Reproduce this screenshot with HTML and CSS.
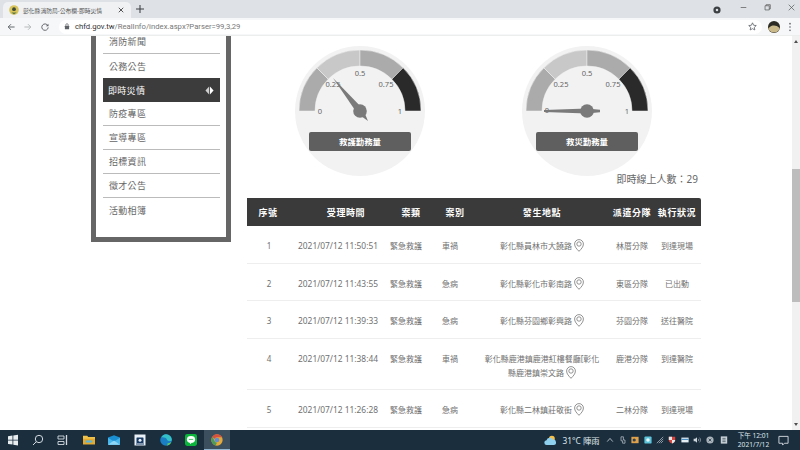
FILE: index.html
```html
<!DOCTYPE html>
<html lang="zh-Hant">
    <head>
        <meta charset="UTF-8">
        <title>彰化縣消防局-公布欄-即時災情</title>
        <link rel="stylesheet" href="styles.css">
    </head>
    <body>
        <!-- browser chrome -->
        <div class="tab-strip">
            <div class="tab">
                <svg class="favicon" viewBox="0 0 10 10"><circle cx="5" cy="5" r="4.8" fill="#d8c45a"/><circle cx="5" cy="4.2" r="1.9" fill="#3d4a3a"/><path d="M2.4 7.6h5.2L5 9.6z" fill="#5a7a45"/></svg>
                <span class="tab-title">彰化縣消防局-公布欄-即時災情</span>
                <svg class="tab-close" viewBox="0 0 8 8"><path d="M1 1l6 6M7 1L1 7" stroke="#444" stroke-width="1.2"/></svg>
            </div>
            <svg class="tab-new" viewBox="0 0 10 10"><path d="M5 0v10M0 5h10" stroke="#3c4043" stroke-width="1.3"/></svg>
            <svg class="record" viewBox="0 0 10 10"><circle cx="5" cy="5" r="4.5" fill="#3c4043"/><circle cx="5" cy="5" r="1.6" fill="#dee1e6"/></svg>
            <svg class="win-btn" viewBox="0 0 10 10"><path d="M1 5h8" stroke="#555" stroke-width="1"/></svg>
            <svg class="win-btn" viewBox="0 0 10 10"><path d="M1.5 2.5h6v6h-6zM3 2.5V1h6v6H7.5" fill="none" stroke="#555" stroke-width="1"/></svg>
            <svg class="win-btn" viewBox="0 0 10 10"><path d="M1 1l8 8M9 1l-8 8" stroke="#555" stroke-width="1"/></svg>
        </div>
        <div class="toolbar">
            <svg class="nav-icon" viewBox="0 0 10 10"><path d="M9.5 5H1.5M5 1.5L1.5 5 5 8.5" fill="none" stroke="#5f6368" stroke-width="1.2"/></svg>
            <svg class="nav-icon" viewBox="0 0 10 10"><path d="M.5 5h8M5 1.5L8.5 5 5 8.5" fill="none" stroke="#b4b7ba" stroke-width="1.2"/></svg>
            <svg class="nav-icon" viewBox="0 0 10 10"><path d="M8.5 3.2A4 4 0 1 0 9 5.5" fill="none" stroke="#5f6368" stroke-width="1.2"/><path d="M9.3.8v3.3H6z" fill="#5f6368"/></svg>
            <div class="omnibox">
                <svg class="lock" viewBox="0 0 8 10"><rect x="1" y="4" width="6" height="5" rx=".6" fill="#5f6368"/><path d="M2.3 4V2.7a1.7 1.7 0 0 1 3.4 0V4" fill="none" stroke="#5f6368"/></svg>
                <span class="url"><b>chfd.gov.tw</b>/RealInfo/index.aspx?Parser=99,3,29</span>
                <svg class="star" viewBox="0 0 10 10"><path d="M5 .9l1.25 2.7 2.95.35-2.2 2 .6 2.9L5 7.4 2.4 8.85l.6-2.9-2.2-2 2.95-.35z" fill="none" stroke="#5f6368" stroke-width=".9"/></svg>
            </div>
            <svg class="avatar" viewBox="0 0 12 12"><circle cx="6" cy="6" r="6" fill="#2b2a24"/><path d="M.3 7.5c2-2.5 4-3 5.7-3s4 .6 5.700 2.800A6 6 0 0 1 .3 7.5z" fill="#c9b98b"/></svg>
            <svg class="menu-dots" viewBox="0 0 4 12"><circle cx="2" cy="2" r="1" fill="#5f6368"/><circle cx="2" cy="6" r="1" fill="#5f6368"/><circle cx="2" cy="10" r="1" fill="#5f6368"/></svg>
        </div>

        <div class="viewport">
            <main class="page">
                <nav class="sidebar">
                    <ul>
                        <li>消防新聞</li>
                        <li>公務公告</li>
                        <li class="active">即時災情
                            <svg class="diamond" viewBox="0 0 10 10"><path d="M4.6.5L.5 5l4.100 4.500z" fill="#cfcfcf"/><path d="M5.500 .5L9.500 5l-4 4.500z" fill="#fff"/></svg>
                        </li>
                        <li>防疫專區</li>
                        <li>宣導專區</li>
                        <li>招標資訊</li>
                        <li>徵才公告</li>
                        <li>活動相簿</li>
                    </ul>
                </nav>

                <section class="content">
                    <div class="gauges">
                        <svg class="gauge" viewBox="-65 -65 130 130">
                            <circle r="65" fill="#f2f2f2"/>
                            <path class="seg-mid" d="M-61 0A61 61 0 0 1-43.13-43.13L-31.82-31.82A45 45 0 0 0-45 0Z"/>
                            <path class="seg-light" d="M-43.13-43.13A61 61 0 0 1 0-61L0-45A45 45 0 0 0-31.82-31.82Z"/>
                            <path class="seg-mid" d="M0-61A61 61 0 0 1 43.13-43.13L31.82-31.82A45 45 0 0 0 0-45Z"/>
                            <path class="seg-dark" d="M43.13-43.13A61 61 0 0 1 61 0L45 0A45 45 0 0 0 31.82-31.82Z"/>
                            <text class="tick" x="-40" y="3">0</text>
                            <text class="tick" x="-27" y="-24">0.25</text>
                            <text class="tick" x="0" y="-35">0.5</text>
                            <text class="tick" x="26" y="-24">0.75</text>
                            <text class="tick" x="40" y="3">1</text>
                            <polygon class="needle" points="-27,-33 2.8,-2.3 8,10 -2.8,2.3"/>
                            <circle class="needle" r="6.8"/>
                            <rect class="gauge-btn" x="-51" y="21" width="102" height="19" rx="2"/>
                            <text class="gauge-label" x="0" y="33.5">救護勤務量</text>
                        </svg>
                        <svg class="gauge" viewBox="-65 -65 130 130">
                            <circle r="65" fill="#f2f2f2"/>
                            <path class="seg-mid" d="M-61 0A61 61 0 0 1-43.13-43.13L-31.82-31.82A45 45 0 0 0-45 0Z"/>
                            <path class="seg-light" d="M-43.13-43.13A61 61 0 0 1 0-61L0-45A45 45 0 0 0-31.82-31.82Z"/>
                            <path class="seg-mid" d="M0-61A61 61 0 0 1 43.13-43.13L31.82-31.82A45 45 0 0 0 0-45Z"/>
                            <path class="seg-dark" d="M43.13-43.13A61 61 0 0 1 61 0L45 0A45 45 0 0 0 31.82-31.82Z"/>
                            <text class="tick" x="-40" y="2">0</text>
                            <text class="tick" x="-26" y="-24">0.25</text>
                            <text class="tick" x="0" y="-35">0.5</text>
                            <text class="tick" x="26" y="-24">0.75</text>
                            <text class="tick" x="40" y="3">1</text>
                            <polygon class="needle" points="-43,-1 0,-2.5 13,-1.3 13,1.3 0,2.5 -43,1"/>
                            <circle class="needle" r="6.8"/>
                            <rect class="gauge-btn" x="-51" y="21" width="102" height="19" rx="2"/>
                            <text class="gauge-label" x="0" y="33.5">救災勤務量</text>
                        </svg>
                    </div>
                    <div class="online">即時線上人數：29</div>

                    <table class="cases">
                        <colgroup>
                            <col class="c-no"><col class="c-time"><col class="c-kind"><col class="c-type"><col class="c-addr"><col class="c-unit"><col class="c-state">
                        </colgroup>
                        <thead>
                            <tr>
                                <th>序號</th>
                                <th class="shift-8">受理時間</th>
                                <th class="shift-5">案類</th>
                                <th class="shift-5">案別</th>
                                <th>發生地點</th>
                                <th>派遣分隊</th>
                                <th>執行狀況</th>
                            </tr>
                        </thead>
                        <tbody>
                            <tr>
                                <td>1</td>
                                <td class="time">2021/07/12 11:50:51</td>
                                <td>緊急救護</td>
                                <td>車禍</td>
                                <td>彰化縣員林市大饒路 <svg class="pin" viewBox="0 0 10 13"><path d="M5 12.3C2.8 10 .6 7.9 .6 5a4.4 4.4 0 0 1 8.8 0c0 2.900-2.200 5-4.400 7.300z" fill="none" stroke="#777" stroke-width=".8"/><circle cx="5" cy="5" r="2.2" fill="none" stroke="#777" stroke-width=".8"/></svg></td>
                                <td>林厝分隊</td>
                                <td>到達現場</td>
                            </tr>
                            <tr>
                                <td>2</td>
                                <td class="time">2021/07/12 11:43:55</td>
                                <td>緊急救護</td>
                                <td>急病</td>
                                <td>彰化縣彰化市彰南路 <svg class="pin" viewBox="0 0 10 13"><path d="M5 12.3C2.8 10 .6 7.9 .6 5a4.4 4.4 0 0 1 8.8 0c0 2.900-2.200 5-4.400 7.300z" fill="none" stroke="#777" stroke-width=".8"/><circle cx="5" cy="5" r="2.2" fill="none" stroke="#777" stroke-width=".8"/></svg></td>
                                <td>東區分隊</td>
                                <td>已出動</td>
                            </tr>
                            <tr>
                                <td>3</td>
                                <td class="time">2021/07/12 11:39:33</td>
                                <td>緊急救護</td>
                                <td>急病</td>
                                <td>彰化縣芬園鄉彰興路 <svg class="pin" viewBox="0 0 10 13"><path d="M5 12.3C2.8 10 .6 7.9 .6 5a4.4 4.4 0 0 1 8.8 0c0 2.900-2.200 5-4.400 7.300z" fill="none" stroke="#777" stroke-width=".8"/><circle cx="5" cy="5" r="2.2" fill="none" stroke="#777" stroke-width=".8"/></svg></td>
                                <td>芬園分隊</td>
                                <td>送往醫院</td>
                            </tr>
                            <tr>
                                <td>4</td>
                                <td class="time">2021/07/12 11:38:44</td>
                                <td>緊急救護</td>
                                <td>車禍</td>
                                <td>彰化縣鹿港鎮鹿港紅樓餐廳[彰化縣鹿港鎮崇文路 <svg class="pin" viewBox="0 0 10 13"><path d="M5 12.3C2.8 10 .6 7.9 .6 5a4.4 4.4 0 0 1 8.8 0c0 2.900-2.200 5-4.400 7.300z" fill="none" stroke="#777" stroke-width=".8"/><circle cx="5" cy="5" r="2.2" fill="none" stroke="#777" stroke-width=".8"/></svg></td>
                                <td>鹿港分隊</td>
                                <td>到達醫院</td>
                            </tr>
                            <tr>
                                <td>5</td>
                                <td class="time">2021/07/12 11:26:28</td>
                                <td>緊急救護</td>
                                <td>急病</td>
                                <td>彰化縣二林鎮莊敬街 <svg class="pin" viewBox="0 0 10 13"><path d="M5 12.3C2.8 10 .6 7.9 .6 5a4.4 4.4 0 0 1 8.8 0c0 2.900-2.200 5-4.400 7.300z" fill="none" stroke="#777" stroke-width=".8"/><circle cx="5" cy="5" r="2.2" fill="none" stroke="#777" stroke-width=".8"/></svg></td>
                                <td>二林分隊</td>
                                <td>到達現場</td>
                            </tr>
                        </tbody>
                    </table>
                </section>
            </main>
            <div class="scrollbar">
                <span class="arrow-up"></span>
                <div class="thumb"></div>
                <span class="arrow-down"></span>
            </div>
        </div>

        <!-- windows taskbar -->
        <footer class="taskbar">
            <div class="task-slot"><svg class="task-icon" viewBox="0 0 12 12"><path d="M1 2.2l4.500-.7v4.200H1zM6.300 1.400L11 .7v5H6.300zM1 6.400h4.500v4.200L1 9.900zM6.300 6.400H11v5l-4.700-.7z" fill="#e8edf0"/></svg></div>
            <div class="task-slot"><svg class="task-icon" viewBox="0 0 12 12"><circle cx="7" cy="5" r="3.7" fill="none" stroke="#d5dbe0"/><path d="M4.300 7.700L1 11" stroke="#d5dbe0"/></svg></div>
            <div class="task-slot"><svg class="task-icon" viewBox="0 0 12 12"><path d="M1 2h6v3H1zM1 7.500h6v3H1z" fill="none" stroke="#d5dbe0" stroke-width=".9"/><path d="M9.500 1v10" stroke="#d5dbe0" stroke-width="1.3"/></svg></div>
            <div class="apps">
                <div class="app-slot"><svg class="task-icon" viewBox="0 0 14 12"><path d="M0 1h5l1 1.500h8V11H0z" fill="#f0c24a"/><path d="M0 4.500h14V11H0z" fill="#e6a92c"/><path d="M3 6.500h8V9H3z" fill="#5db4d6"/></svg></div>
                <div class="app-slot"><svg class="task-icon" viewBox="0 0 14 12"><path d="M0 3l7-2.500L14 3v8.500H0z" fill="#1a8fd1"/><path d="M0 3.500L7 7.800l7-4.300v8H0z" fill="#47b4ea"/><path d="M0 11.500L7 6.500l7 5z" fill="#8fd5f5"/></svg></div>
                <div class="app-slot"><svg class="task-icon" viewBox="0 0 12 12"><rect x=".5" y=".5" width="11" height="11" fill="#e9f0f6"/><rect x="2.5" y="3.5" width="7" height="5.5" rx=".6" fill="#173a64"/><circle cx="6" cy="6.2" r="1.5" fill="#e9f0f6"/><path d="M2 10h8" stroke="#173a64"/></svg></div>
                <div class="app-slot"><svg class="task-icon" viewBox="0 0 14 14"><circle cx="7" cy="7" r="6.8" fill="#1a7fc4"/><path d="M7 .2a6.800 6.800 0 0 1 6.800 7.300c-1.500 1-5 1-5.600-.9C7.500 4.500 4 3.500 1.500 4 2.500 1.800 4.500.2 7 .2z" fill="#35c1c8"/><path d="M13.600 8.500c-1 3-3.300 5-6.300 5.200 1.500-.7 2-2 1.500-3.200 1.600 .6 3.600 .1 4.800-2z" fill="#66cf5c"/></svg></div>
                <div class="app-slot"><svg class="task-icon" viewBox="0 0 14 14"><rect width="14" height="14" rx="2.5" fill="#0bb53c"/><ellipse cx="7" cy="6.3" rx="4.8" ry="3.9" fill="#fff"/><path d="M5.500 9.500L6 12l2.500-2.500z" fill="#fff"/><path d="M4.500 6.300h5" stroke="#0bb53c" stroke-width=".9"/></svg></div>
                <div class="app-slot app-on"><svg class="task-icon" viewBox="0 0 14 14"><circle cx="7" cy="7" r="6.6" fill="#e5a93a"/><path d="M7 .4A6.600 6.600 0 0 1 12.800 3.800H7A3.200 3.200 0 0 0 4 5.800L1.600 3.200A6.600 6.600 0 0 1 7 .4z" fill="#d9503f"/><path d="M1.600 3.200L4.700 9A3.200 3.200 0 0 0 7 10.300l-1.700 3.100A6.600 6.600 0 0 1 1.600 3.200z" fill="#4c9b58"/><circle cx="7" cy="7" r="2.7" fill="#5c8fd8"/></svg></div>
            </div>
            <div class="tray">
                <svg class="weather" viewBox="0 0 14 12"><circle cx="8.5" cy="4" r="3.2" fill="#f2c14b"/><path d="M3 11a2.600 2.600 0 0 1-.3-5.200A3.600 3.600 0 0 1 9.500 5a3 3 0 0 1 1 6z" fill="#8fd0ee"/></svg>
                <span class="temp">31°C 陣雨</span>
                <svg class="tray-icon" viewBox="0 0 10 10"><path d="M1.500 7L5 3l3.500 4" fill="none" stroke="#cfd6db"/></svg>
                <svg class="tray-icon" viewBox="0 0 10 10"><path d="M2.500 1h3v4h2v4h-3V6h-2z" fill="none" stroke="#cfd6db" stroke-width=".8"/></svg>
                <svg class="tray-icon" viewBox="0 0 10 10"><rect x=".5" y="1" width="9" height="8" fill="#dfa24a"/><circle cx="4" cy="5" r="2" fill="#33424f"/></svg>
                <svg class="tray-icon" viewBox="0 0 10 10"><rect x=".5" y=".5" width="9" height="9" rx="1.5" fill="#5cc3d8"/><circle cx="5" cy="5" r="2.2" fill="#eaf6f9"/></svg>
                <svg class="tray-icon" viewBox="0 0 10 10"><path d="M1 9L9 1M3.500 9L9 3.500M6 9l3-3" stroke="#b9c2c8" stroke-width=".9"/></svg>
                <svg class="tray-icon" viewBox="0 0 10 10"><path d="M1 1h8v4c0 2.500-2 3.800-4 4.500C3 8.800 1 7.500 1 5z" fill="#d8453f"/><path d="M1 1h4v4H1zM5 5h4c0 2-2 3.800-4 4.500z" fill="#e8e8e8"/></svg>
                <svg class="tray-icon" viewBox="0 0 10 10"><rect x=".5" y="2" width="9" height="6" fill="#e5eef3"/><rect x=".5" y="3.5" width="9" height="1.5" fill="#4d8fc0"/></svg>
                <svg class="tray-icon" viewBox="0 0 10 10"><path d="M.8 3.500h2L5 1.500v7L2.800 6.500h-2z" fill="#cfd6db"/><path d="M6.500 3.500a2 2 0 0 1 0 3M8 2a4 4 0 0 1 0 6" fill="none" stroke="#cfd6db" stroke-width=".7"/></svg>
                <svg class="tray-icon" viewBox="0 0 10 10"><circle cx="5" cy="5" r="4.5" fill="#aab4ba"/><path d="M3.300 3.300l3.400 3.400M6.700 3.300L3.300 6.700" stroke="#22384a"/></svg>
                <svg class="tray-icon ime" viewBox="0 0 10 10"><rect x="1" y=".5" width="8" height="9" fill="#c8d0d6"/><path d="M3 3h4M3 5h4M3 7h4" stroke="#4a5a66"/></svg>
                <div class="clock"><span>下午 12:01</span><span>2021/7/12</span></div>
                <svg class="notify" viewBox="0 0 12 12"><path d="M1 1.500h10v7.500H7L5 11V9H1z" fill="none" stroke="#d5dbe0"/></svg>
            </div>
        </footer>
    </body>
</html>
```

FILE: styles.css
```css
html, body {
    width: 800px;
    height: 450px;
    overflow: hidden;
}

body {
    margin: 0;
    display: flex;
    flex-direction: column;
    background: #fff;
    color: #666;
    font-family: "Noto Sans", "Noto Sans CJK TC", sans-serif;
}

/* browser chrome */
.tab-strip {
    height: 18px;
    flex: none;
    display: flex;
    align-items: center;
    background: #dee1e6;
}

.tab {
    width: 128px;
    height: 16px;
    margin: 2px 0 0 3px;
    display: flex;
    align-items: center;
    background: #eff1f3;
    border-radius: 5px 5px 0 0;
}

.favicon {
    width: 10px;
    height: 10px;
    margin-left: 6px;
}

.tab-title {
    margin-left: 4px;
    width: 93px;
    font-size: 5.8px;
    color: #555;
    white-space: nowrap;
}

.tab-close {
    width: 6px;
    height: 6px;
    margin-left: 2px;
}

.tab-new {
    width: 8px;
    height: 8px;
    margin-left: 5px;
}

.record {
    width: 8px;
    height: 8px;
    margin-left: 569px;
    margin-top: 1px;
}

.win-btn {
    width: 7px;
    height: 7px;
    margin-left: 17px;
    margin-top: -4px;
}

.win-btn:nth-of-type(3) {
    margin-left: 19px;
}

.toolbar {
    height: 18px;
    flex: none;
    display: flex;
    align-items: center;
    background: #f6f7f8;
    border-bottom: 1px solid #eceded;
    box-sizing: border-box;
    padding-left: 7px;
}

.nav-icon {
    width: 8px;
    height: 8px;
    margin-right: 9px;
}

.omnibox {
    width: 703px;
    height: 14px;
    margin-left: 1px;
    display: flex;
    align-items: center;
    background: #fff;
    border-radius: 7px;
}

.lock {
    width: 6px;
    height: 7px;
    margin-left: 5px;
}

.url {
    margin-left: 5px;
    font-family: Roboto, sans-serif;
    font-size: 7.7px;
    color: #777;
}

.url b {
    font-weight: 400;
    color: #333;
}

.star {
    width: 9px;
    height: 9px;
    margin-left: auto;
    margin-right: 5px;
}

.avatar {
    width: 12px;
    height: 12px;
    margin-left: 6px;
}

.menu-dots {
    width: 4px;
    height: 10px;
    margin-left: 8px;
}

/* scrolled page */
.viewport {
    flex: 1;
    min-height: 0;
    display: flex;
    overflow: hidden;
}

.page {
    flex: 1;
    display: flex;
    align-items: flex-start;
    margin-top: -30px;
    padding-left: 91px;
}

.sidebar {
    width: 117px;
    border: 5px solid #666;
    padding: 19px 6px 15px 7px;
    background: #fff;
    flex: none;
    margin-right: 16px;
}

.sidebar ul {
    list-style: none;
    margin: 0;
    padding: 0;
}

.sidebar li {
    height: 24px;
    box-sizing: border-box;
    padding-left: 6px;
    display: flex;
    align-items: center;
    justify-content: space-between;
    font-size: 9px;
    letter-spacing: .3px;
    color: #666;
    border-bottom: 1px solid #bbb;
}

.sidebar li:nth-child(2) {
    border-bottom: none;
}

.sidebar li:last-child {
    border-bottom: none;
}

.sidebar li.active {
    padding-left: 5px;
    padding-right: 6px;
    background: #3c3c3c;
    color: #fff;
    border-bottom: none;
}

.diamond {
    width: 9px;
    height: 9px;
}

.content {
    width: 454px;
    padding-top: 40px;
}

.gauges {
    display: flex;
    gap: 97px;
    padding-left: 48px;
}

.gauge {
    width: 130px;
    height: 130px;
    flex: none;
}

.seg-mid {
    fill: #ababab;
    stroke: #f2f2f2;
    stroke-width: .5;
}

.seg-light {
    fill: #c8c8c8;
    stroke: #f2f2f2;
    stroke-width: .5;
}

.seg-dark {
    fill: #2a2a2a;
    stroke: #f2f2f2;
    stroke-width: .5;
}

.tick {
    font-size: 7.5px;
    fill: #666;
    text-anchor: middle;
}

.needle {
    fill: #7a7a7a;
}

.gauge-btn {
    fill: #5f5f5f;
}

.gauge-label {
    font-size: 8.4px;
    font-weight: 700;
    fill: #fff;
    text-anchor: middle;
}

.online {
    margin-top: -3px;
    height: 25px;
    padding-right: 3px;
    line-height: 13px;
    text-align: right;
    font-size: 10px;
    color: #666;
}

.cases {
    width: 454px;
    table-layout: fixed;
    border-collapse: collapse;
}

.c-no { width: 44px; }
.c-time { width: 94px; }
.c-kind { width: 42px; }
.c-type { width: 46px; }
.c-addr { width: 138px; }
.c-unit { width: 42px; }
.c-state { width: 48px; }

.cases th {
    height: 28px;
    padding: 0;
    background: #3a3a3a;
    color: #fff;
    font-size: 9px;
    font-weight: 700;
    letter-spacing: .6px;
    white-space: nowrap;
    text-align: center;
}

.cases th:first-child {
    padding-right: 2px;
}

.cases th:last-child {
    border-radius: 0 2px 0 0;
}

.cases th.shift-8 {
    padding-left: 16px;
}

.cases th.shift-5 {
    padding-left: 10px;
}

.cases td {
    padding: 13px 0 9.5px;
    border-bottom: 1px solid #eee;
    font-size: 8px;
    line-height: 14px;
    color: #707070;
    text-align: center;
    vertical-align: top;
    white-space: nowrap;
}

.cases td:nth-child(5) {
    padding-left: 9px;
    padding-right: 9px;
    white-space: normal;
}

.cases td.time {
    font-size: 8.4px;
}

.pin {
    width: 10px;
    height: 13px;
    vertical-align: -3px;
}

/* fake scrollbar */
.scrollbar {
    width: 8px;
    flex: none;
    display: flex;
    flex-direction: column;
    align-items: center;
    background: #f1f1f1;
}

.arrow-up {
    margin-top: 4px;
    border: 2px solid transparent;
    border-top: none;
    border-bottom: 3px solid #505050;
}

.arrow-down {
    margin-top: auto;
    margin-bottom: 4px;
    border: 2px solid transparent;
    border-bottom: none;
    border-top: 3px solid #505050;
}

.thumb {
    width: 8px;
    height: 133px;
    margin-top: 126px;
    background: #bdbdbd;
}

/* windows taskbar */
.taskbar {
    height: 20px;
    flex: none;
    display: flex;
    align-items: center;
    background: #1a2e3e;
}

.task-slot {
    width: 25px;
    height: 20px;
    display: flex;
    align-items: center;
    justify-content: center;
}

.apps {
    display: flex;
    margin-left: 1px;
}

.app-slot {
    width: 25.6px;
    height: 20px;
    display: flex;
    align-items: center;
    justify-content: center;
}

.app-on {
    background: #3c4f5e;
    border-bottom: 1px solid #8fb4d0;
    box-sizing: border-box;
}

.task-icon {
    width: 12px;
    height: 12px;
}

.tray {
    margin-left: auto;
    display: flex;
    align-items: center;
    color: #dfe5e9;
}

.weather {
    width: 13px;
    height: 11px;
}

.temp {
    margin: 0 7px 0 5px;
    font-size: 8.3px;
    white-space: nowrap;
}

.tray-icon {
    width: 8px;
    height: 8px;
    margin-right: 4.4px;
}

.tray-icon.ime {
    margin: 0 10px 0 2px;
}

.clock {
    width: 31px;
    display: flex;
    flex-direction: column;
    align-items: center;
    font-size: 6.6px;
    line-height: 9px;
    white-space: nowrap;
}

.notify {
    width: 11px;
    height: 11px;
    margin: 0 11px 0 9px;
}
```
